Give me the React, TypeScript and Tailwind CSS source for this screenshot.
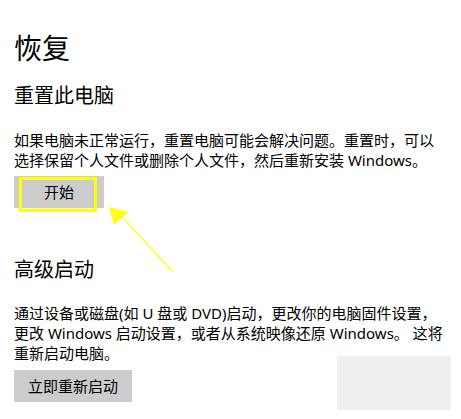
import React from 'react';

const font = { fontFamily: '"Noto Sans", "Noto Sans CJK SC", sans-serif' };

const App: React.FC = () => {
  return (
    <div
      className="relative w-[461px] h-[419px] overflow-hidden bg-white pl-[14px] pt-[30px] text-black"
      style={font}
    >
      {/* Page title */}
      <h1 className="text-[28px] leading-[36px] font-normal">恢复</h1>

      {/* Reset this PC */}
      <h2 className="mt-[16px] text-[20px] leading-[28px] font-normal">重置此电脑</h2>
      <p className="mt-[20px] text-[15px] leading-[20px] whitespace-nowrap">
        如果电脑未正常运行，重置电脑可能会解决问题。重置时，可以
        <br />
        选择保留个人文件或删除个人文件，然后重新安装 Windows。
      </p>
      <div className="relative mt-[6px] w-[90px]">
        <button className="flex h-[32px] w-[90px] items-center justify-center bg-[#cccccc] text-[15px] leading-[20px]">
          开始
        </button>
        {/* highlight frame */}
        <div className="absolute left-[5px] top-[1px] h-[35px] w-[78px] border-[3px] border-[#ffff00]" />
      </div>

      {/* Advanced startup */}
      <h2 className="mt-[48px] text-[20px] leading-[28px] font-normal">高级启动</h2>
      <p className="mt-[19px] text-[15px] leading-[20px] whitespace-nowrap">
        通过设备或磁盘(如 U 盘或 DVD)启动，更改你的电脑固件设置，
        <br />
        更改 Windows 启动设置，或者从系统映像还原 Windows。 这将
        <br />
        重新启动电脑。
      </p>
      <button className="mt-[7px] flex h-[32px] items-center bg-[#cccccc] px-[14px] text-[15px] leading-[20px]">
        立即重新启动
      </button>

      {/* grey patch bottom right */}
      <div className="absolute left-[337px] top-[356px] h-[54px] w-[114px] bg-[#efeef0]" />

      {/* arrow annotation */}
      <svg
        className="pointer-events-none absolute left-0 top-0"
        width="461"
        height="419"
        viewBox="0 0 461 419"
      >
        <polygon points="109,207 129,212 114,225" fill="#ffff1a" />
        <polygon points="116,211 126,220 175,273 171,271" fill="#ffff1a" />
      </svg>
    </div>
  );
};

export default App;
